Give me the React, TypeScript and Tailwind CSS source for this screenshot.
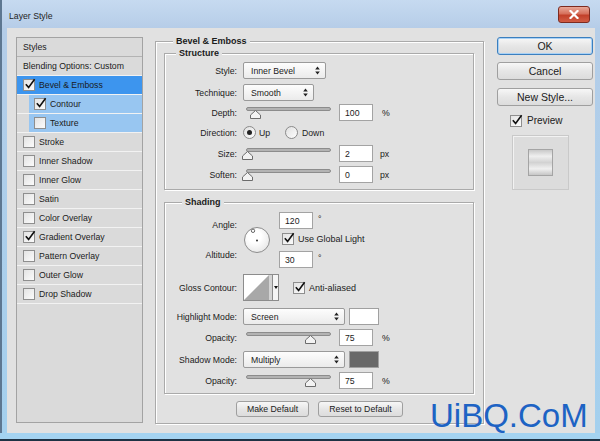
import React from 'react'

// Photoshop "Layer Style" dialog, Bevel & Emboss page

type StyleRow = { label: string; on?: boolean; sel?: boolean; sub?: boolean }

const styleRows: StyleRow[] = [
  { label: 'Bevel & Emboss', on: true, sel: true },
  { label: 'Contour', on: true, sub: true },
  { label: 'Texture', sub: true },
  { label: 'Stroke' },
  { label: 'Inner Shadow' },
  { label: 'Inner Glow' },
  { label: 'Satin' },
  { label: 'Color Overlay' },
  { label: 'Gradient Overlay', on: true },
  { label: 'Pattern Overlay' },
  { label: 'Outer Glow' },
  { label: 'Drop Shadow' },
]

function Check({ on }: { on?: boolean }) {
  return (
    <span className="relative block h-[12px] w-[12px] shrink-0 border border-[#8e8e8e] bg-[linear-gradient(135deg,#e3e3e3,#fbfbfb)]">
      {on && (
        <svg viewBox="0 0 12 12" className="absolute -top-[2px] left-[0px] h-[12px] w-[12px]">
          <path d="M1.8 6.2 L4.6 9.4 L10.6 1.2" fill="none" stroke="#111" strokeWidth="1.6" />
        </svg>
      )}
    </span>
  )
}

function Radio({ on }: { on?: boolean }) {
  return (
    <span className="flex h-[13px] w-[13px] shrink-0 items-center justify-center rounded-full border border-[#8a8a8a] bg-[linear-gradient(135deg,#e0e0e0,#fdfdfd)]">
      {on && <span className="h-[5px] w-[5px] rounded-full bg-[#222]" />}
    </span>
  )
}

function UpDown() {
  return (
    <svg viewBox="0 0 5 9" className="h-[9px] w-[5px]">
      <path d="M2.5 0.5 L4.8 3.5 H0.2 Z M2.5 8.5 L4.8 5.5 H0.2 Z" fill="#222" />
    </svg>
  )
}

function Select({ value, className }: { value: string; className: string }) {
  return (
    <div
      className={`flex h-[17px] shrink-0 items-center justify-between rounded-[2px] border border-[#9a9a9a] bg-[linear-gradient(#fdfdfd,#ebebeb)] pl-[7px] pr-[5px] ${className}`}
    >
      <span>{value}</span>
      <UpDown />
    </div>
  )
}

function Input({ value }: { value: string }) {
  return (
    <div className="flex h-[17px] w-[34px] shrink-0 items-center border border-[#a3a3a3] bg-white pl-[5px]">
      {value}
    </div>
  )
}

function Slider({ pos }: { pos: number }) {
  return (
    <div className="relative h-[17px] w-[85px] shrink-0">
      <div className="absolute left-0 right-0 top-[3px] h-[4px] rounded-[2px] border border-[#8c8c8c] bg-[#b3b3b3]" />
      <svg viewBox="0 0 11 9" className="absolute top-[6px] h-[9px] w-[11px]" style={{ left: pos - 5 }}>
        <path d="M5.5 0.5 L10.5 5 V8.5 H0.5 V5 Z" fill="#f3f3f3" stroke="#6c6c6c" />
      </svg>
    </div>
  )
}

function Legend({ children, className }: { children: React.ReactNode; className: string }) {
  return (
    <span className={`absolute -top-[7px] bg-[#e1e1e1] px-[3px] text-[9px] font-bold leading-[12px] text-[#1b1b1b] ${className}`}>
      {children}
    </span>
  )
}

function Label({ children }: { children: React.ReactNode }) {
  return <span className="w-[72px] shrink-0 pr-[0px] text-right">{children}</span>
}

function Btn({ children, className = '', primary }: { children: React.ReactNode; className?: string; primary?: boolean }) {
  return (
    <div
      className={`flex items-center justify-center rounded-[3px] border bg-[linear-gradient(#f7f7f7,#e6e6e6_50%,#dcdcdc)] ${
        primary ? 'border-[#3b7fbf] shadow-[inset_0_0_0_1px_#a9d1f5]' : 'border-[#9f9f9f]'
      } ${className}`}
    >
      {children}
    </div>
  )
}

function StylesList() {
  return (
    <div className="h-[386px] w-[127px] shrink-0 border border-[#a3a3a3] bg-[#dadada]">
      <div className="flex h-[19px] items-center border-b border-[#b3b3b3] pl-[6px]">Styles</div>
      <div className="flex h-[19px] items-center border-b border-[#f2f2f2] pl-[6px]">Blending Options: Custom</div>
      {styleRows.map((r) =>
        r.sub ? (
          <div key={r.label} className="flex h-[19px] border-b border-[#f2f2f2] pl-[12px]">
            <div className="flex flex-1 items-center gap-[4px] bg-[#98c6f1] pl-[5px]">
              <Check on={r.on} />
              <span>{r.label}</span>
            </div>
          </div>
        ) : (
          <div
            key={r.label}
            className={`flex h-[19px] items-center gap-[4px] border-b border-[#f2f2f2] pl-[6px] ${r.sel ? 'bg-[#3d95ee]' : ''}`}
          >
            <Check on={r.on} />
            <span>{r.label}</span>
          </div>
        )
      )}
    </div>
  )
}

const boxCls =
  'relative border border-[#aaaaaa] shadow-[inset_1px_1px_0_#ffffff,1px_1px_0_#ffffff]'

function Structure() {
  return (
    <div className={`${boxCls} h-[137px] w-[310px] pt-[8px]`}>
      <Legend className="left-[11px]">Structure</Legend>
      <div className="flex h-[17px] items-center gap-[6px]">
        <Label>Style:</Label>
        <Select value="Inner Bevel" className="w-[83px]" />
      </div>
      <div className="mt-[5px] flex h-[17px] items-center gap-[6px]">
        <Label>Technique:</Label>
        <Select value="Smooth" className="w-[71px]" />
      </div>
      <div className="mt-[3px] flex h-[17px] items-center">
        <Label>Depth:</Label>
        <div className="ml-[9px]"><Slider pos={9} /></div>
        <div className="ml-[8px]"><Input value="100" /></div>
        <span className="ml-[9px]">%</span>
      </div>
      <div className="mt-[3px] flex h-[17px] items-center">
        <Label>Direction:</Label>
        <div className="ml-[6px] flex w-[42px] items-center gap-[3px]">
          <Radio on />
          <span>Up</span>
        </div>
        <div className="flex items-center gap-[4px]">
          <Radio />
          <span>Down</span>
        </div>
      </div>
      <div className="mt-[4px] flex h-[17px] items-center">
        <Label>Size:</Label>
        <div className="ml-[9px]"><Slider pos={1} /></div>
        <div className="ml-[8px]"><Input value="2" /></div>
        <span className="ml-[7px]">px</span>
      </div>
      <div className="mt-[4px] flex h-[17px] items-center">
        <Label>Soften:</Label>
        <div className="ml-[9px]"><Slider pos={1} /></div>
        <div className="ml-[8px]"><Input value="0" /></div>
        <span className="ml-[7px]">px</span>
      </div>
    </div>
  )
}

function Shading() {
  return (
    <div className={`${boxCls} mt-[12px] h-[192px] w-[310px] pt-[9px]`}>
      <Legend className="left-[17px]">Shading</Legend>
      <div className="flex">
        <div className="flex w-[72px] shrink-0 flex-col items-end pt-[7px]">
          <span>Angle:</span>
          <span className="mt-[18px]">Altitude:</span>
        </div>
        <div className="ml-[7px] mt-[15px] h-[26px] w-[26px] shrink-0 rounded-full border border-[#8d8d8d] bg-[radial-gradient(circle_at_40%_35%,#ffffff_30%,#dedede)]">
          <svg viewBox="0 0 24 24" className="block h-full w-full">
            <circle cx="8" cy="2.8" r="1.7" fill="#fff" stroke="#444" strokeWidth="0.8" />
            <circle cx="12" cy="12.5" r="1" fill="#333" />
          </svg>
        </div>
        <div className="ml-[9px] flex flex-col">
          <div className="flex h-[17px] items-center">
            <Input value="120" />
            <span className="ml-[5px] -mt-[4px]">°</span>
          </div>
          <div className="mt-[4px] flex h-[12px] items-center gap-[4px] pl-[3px] text-[9px]">
            <Check on />
            <span>Use Global Light</span>
          </div>
          <div className="mt-[6px] flex h-[17px] items-center">
            <Input value="30" />
            <span className="ml-[5px] -mt-[4px]">°</span>
          </div>
        </div>
      </div>
      <div className="mt-[6px] flex h-[27px] items-center">
        <Label>Gloss Contour:</Label>
        <div className="ml-[6px] flex h-[27px]">
          <div className="h-[27px] w-[30px] border border-[#8c8c8c] bg-white">
            <svg viewBox="0 0 28 25" preserveAspectRatio="none" className="block h-full w-full">
              <path d="M0 25 L25 0 V25 Z" fill="#a8a8a8" />
              <rect x="25" y="0" width="3" height="25" fill="#d4d4d4" />
            </svg>
          </div>
          <div className="flex w-[6px] items-center justify-center border border-l-0 border-[#8c8c8c] bg-[#f5f5f5]">
            <svg viewBox="0 0 4 3" className="h-[3px] w-[4px]">
              <path d="M0 0 H4 L2 3 Z" fill="#111" />
            </svg>
          </div>
        </div>
        <div className="ml-[14px] flex items-center gap-[4px] text-[9px]">
          <Check on />
          <span>Anti-aliased</span>
        </div>
      </div>
      <div className="mt-[7px] flex h-[17px] items-center">
        <Label>Highlight Mode:</Label>
        <Select value="Screen" className="ml-[6px] w-[102px]" />
        <div className="ml-[4px] h-[17px] w-[30px] border border-[#a0a0a0] bg-white" />
      </div>
      <div className="mt-[4px] flex h-[17px] items-center">
        <Label>Opacity:</Label>
        <div className="ml-[9px]"><Slider pos={64} /></div>
        <div className="ml-[8px]"><Input value="75" /></div>
        <span className="ml-[9px]">%</span>
      </div>
      <div className="mt-[5px] flex h-[17px] items-center">
        <Label>Shadow Mode:</Label>
        <Select value="Multiply" className="ml-[6px] w-[102px]" />
        <div className="ml-[4px] h-[17px] w-[30px] border border-[#a0a0a0] bg-[#686868]" />
      </div>
      <div className="mt-[4px] flex h-[17px] items-center">
        <Label>Opacity:</Label>
        <div className="ml-[9px]"><Slider pos={64} /></div>
        <div className="ml-[8px]"><Input value="75" /></div>
        <span className="ml-[9px]">%</span>
      </div>
    </div>
  )
}

function MainPanel() {
  return (
    <div className={`${boxCls} ml-[12px] mt-[4px] h-[383px] w-[329px] shrink-0 pl-[8px] pt-[11px]`}>
      <Legend className="left-[17px]">Bevel &amp; Emboss</Legend>
      <Structure />
      <Shading />
      <div className="mt-[7px] flex justify-center gap-[9px] pr-[8px]">
        <Btn className="h-[16px] w-[73px]">Make Default</Btn>
        <Btn className="h-[16px] w-[85px]">Reset to Default</Btn>
      </div>
    </div>
  )
}

function RightColumn() {
  return (
    <div className="ml-[13px] flex w-[96px] shrink-0 flex-col text-[10.5px]">
      <Btn primary className="h-[18px]">OK</Btn>
      <Btn className="mt-[7px] h-[18px]">Cancel</Btn>
      <Btn className="mt-[8px] h-[18px]">New Style...</Btn>
      <div className="mt-[9px] flex h-[12px] items-center pl-[13px] text-[10px]">
        <Check on />
        <span className="ml-[5px]">Preview</span>
      </div>
      <div className="ml-[15px] mt-[8px] flex h-[55px] w-[57px] items-center justify-center border border-[#c9c9c9] bg-[#dcdcdc] shadow-[inset_1px_1px_0_#f2f2f2]">
        <div className="h-[27px] w-[25px] border border-[#a4a4a4] bg-[linear-gradient(#c9c9c9,#efefef_25%,#d2d2d2_50%,#f0f0f0_75%,#c6c6c6)]" />
      </div>
    </div>
  )
}

function CloseButton() {
  return (
    <div className="flex h-[17px] w-[32px] items-center justify-center rounded-[3px] border border-[#7d2b20] bg-[linear-gradient(#e9a898,#d6705c_45%,#c2402a_55%,#d15c44)]">
      <svg viewBox="0 0 10 9" className="h-[9px] w-[10px]">
        <path d="M1.5 1 L8.5 8 M8.5 1 L1.5 8" stroke="#fff" strokeWidth="2.2" strokeLinecap="square" />
      </svg>
    </div>
  )
}

export default function App() {
  return (
    <div className="relative flex h-[441px] w-[600px] flex-col overflow-hidden bg-[#aecbe8] font-['Liberation_Sans',Arial,sans-serif] text-[8.7px] leading-[12px] text-[#1b1b1b]">
      <div className="flex h-[28px] shrink-0 items-center justify-between border-l-[2px] border-[#5d7791] bg-[linear-gradient(#c6daf0,#b6cde8)] pl-[7px] pr-[10px]">
        <span className="mt-[3px] text-[8.7px] text-[#1e1e1e]">Layer Style</span>
        <CloseButton />
      </div>
      <div className="flex h-[405px] shrink-0">
        <div className="w-[7px] shrink-0 border-l-[2px] border-[#5d7791] bg-[linear-gradient(#b4cde8,#a4d0ee)]" />
        <div className="flex h-[405px] w-[588px] shrink-0 bg-[#e1e1e1] pl-[9px] pt-[9px]">
          <StylesList />
          <MainPanel />
          <RightColumn />
        </div>
        <div className="w-[5px] shrink-0 bg-[linear-gradient(#b4cde8,#a4d0ee)]" />
      </div>
      <div className="h-[8px] shrink-0 border-b-[2px] border-[#1e3244] bg-[#a4d3f1]" />
      <span className="absolute left-[430px] top-[399px] text-[33px] leading-[33px] text-[#1d63c4]">UiBQ.CoM</span>
    </div>
  )
}
